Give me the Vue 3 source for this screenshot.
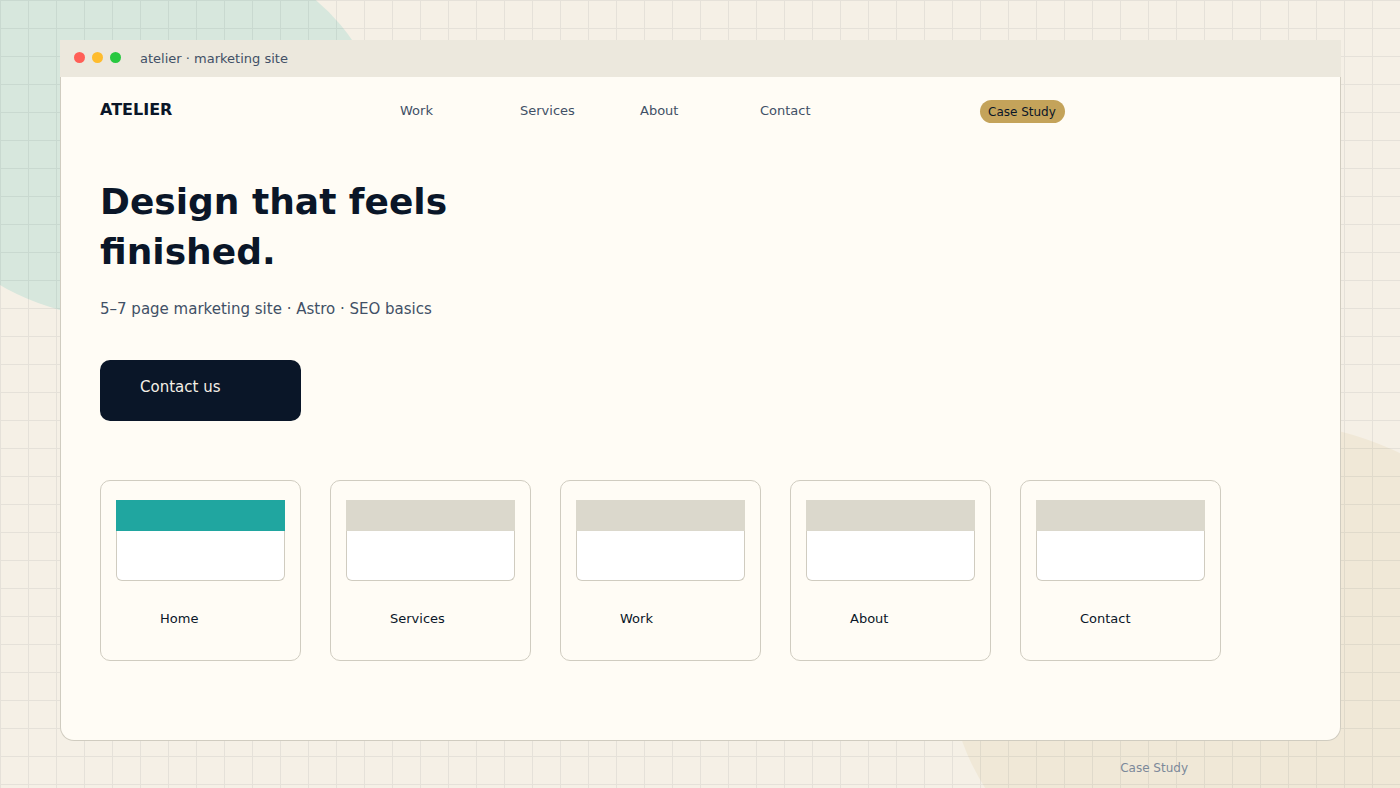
<script setup>
const links = ['Work', 'Services', 'About', 'Contact']
const pages = [
  { name: 'Home', active: true },
  { name: 'Services' },
  { name: 'Work' },
  { name: 'About' },
  { name: 'Contact' },
]
</script>

<template>
  <div class="page">
    <div class="blob blob-mint"></div>
    <div class="blob blob-sand"></div>
    <svg class="grid-lines" aria-hidden="true">
      <defs>
        <pattern id="grid" width="28" height="28" patternUnits="userSpaceOnUse">
          <path d="M0 0H28V1H1V28H0Z" fill="#0a1628" fill-opacity="0.07" />
        </pattern>
      </defs>
      <rect width="100%" height="100%" fill="url(#grid)" />
    </svg>

    <main class="window">
      <header class="titlebar">
        <span class="dots">
          <i class="dot red"></i>
          <i class="dot amber"></i>
          <i class="dot green"></i>
        </span>
        <span class="title">atelier · marketing site</span>
      </header>

      <div class="site">
        <nav class="nav">
          <a class="brand" href="#">ATELIER</a>
          <div class="links">
            <a v-for="l in links" :key="l" href="#">{{ l }}</a>
          </div>
          <button class="pill" type="button">Case Study</button>
        </nav>

        <section class="hero">
          <h1>Design that feels<br />finished.</h1>
          <p>5–7 page marketing site · Astro · SEO basics</p>
          <button class="cta" type="button">Contact us</button>
        </section>

        <section class="cards">
          <a v-for="p in pages" :key="p.name" class="card" href="#">
            <span class="thumb"><span class="thumb-head" :class="{ active: p.active }"></span></span>
            <span class="label">{{ p.name }}</span>
          </a>
        </section>
      </div>
    </main>

    <footer class="foot">Case Study</footer>
  </div>
</template>

<style>
body {
  margin: 0;
}
</style>

<style scoped>
.page {
  position: relative;
  display: flex;
  flex-direction: column;
  box-sizing: border-box;
  min-height: 100vh;
  padding: 40px 59px 0 60px;
  overflow: hidden;
  background: #f5f0e6;
  color: #0a1628;
  font-family: "DejaVu Sans", Verdana, sans-serif;
}
.page a {
  color: inherit;
  text-decoration: none;
}
.page button {
  border: 0;
  font-family: inherit;
  text-align: left;
  cursor: pointer;
}
.blob {
  position: absolute;
  border-radius: 50%;
}
.blob-mint {
  left: -100px;
  top: -60px;
  width: 481px;
  height: 381px;
  background: #d7e7dd;
}
.blob-sand {
  right: -151px;
  top: 420px;
  width: 601px;
  height: 501px;
  background: #f0e8d7;
}
.grid-lines {
  position: absolute;
  inset: 0;
  width: 100%;
  height: 100%;
}
.window {
  position: relative;
  display: flex;
  flex-direction: column;
  flex: 1;
}
.titlebar {
  display: flex;
  align-items: center;
  gap: 18px;
  height: 37px;
  padding: 0 14px;
  background: #ece8dd;
  color: #415066;
  font-size: 13px;
}
.dots {
  display: flex;
  gap: 7px;
  padding: 0 1px 2px 0;
}
.dot {
  width: 11px;
  height: 11px;
  border-radius: 50%;
}
.red { background: #ff5f57; }
.amber { background: #febc2e; }
.green { background: #28c840; }
.site {
  flex: 1;
  padding: 23px 119px 79px 39px;
  border: 1px solid #d0ccc0;
  border-top: 0;
  border-radius: 0 0 14px 14px;
  background: #fffcf5;
}
.nav {
  display: grid;
  grid-template-columns: 300px 480px 1fr;
  align-items: start;
  height: 77px;
}
.brand {
  font-size: 16px;
  font-weight: 700;
  line-height: 20px;
}
.links {
  display: grid;
  grid-template-columns: repeat(4, 1fr);
  color: #415066;
  font-size: 13px;
  line-height: 22px;
}
.pill {
  justify-self: start;
  margin-left: 100px;
  height: 23px;
  padding: 1px 9px 0 8px;
  border-radius: 12px;
  background: #c4a35a;
  color: #0a1628;
  font-size: 12px;
  line-height: 22px;
}
h1 {
  margin: 0 0 21px;
  font-size: 36px;
  font-weight: 700;
  line-height: 50px;
}
.hero p {
  margin: 0 0 40px;
  color: #415066;
  font-size: 15px;
  line-height: 22px;
}
.cta {
  display: block;
  width: 201px;
  height: 61px;
  padding: 0 40px 8px;
  border-radius: 10px;
  background: #0a1628;
  color: #f5f0e6;
  font-size: 15px;
}
.cards {
  display: grid;
  grid-template-columns: repeat(5, 1fr);
  gap: 29px;
  margin-top: 59px;
}
.card {
  display: flex;
  flex-direction: column;
  padding: 19px 15px 31px;
  border: 1px solid #d0ccc0;
  border-radius: 10px;
}
.thumb {
  height: 80px;
  border: 1px solid #d0ccc0;
  border-top: 0;
  border-radius: 0 0 6px 6px;
  background: #fff;
}
.thumb-head {
  display: block;
  height: 31px;
  margin: 0 -1px;
  background: #dbd8cc;
}
.thumb-head.active {
  background: #20a6a0;
}
.label {
  padding: 28px 0 0 44px;
  font-size: 13px;
  line-height: 20px;
}
.foot {
  position: relative;
  align-self: flex-end;
  padding: 17px 153px 10px 0;
  color: #7c899a;
  font-size: 12px;
  line-height: 20px;
}
</style>
